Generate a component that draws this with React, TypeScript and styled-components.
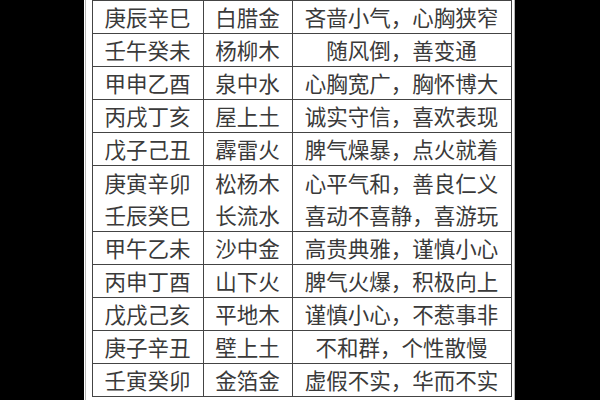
import React from 'react';
import styled, { createGlobalStyle } from 'styled-components';

const rows = [
  { ganzhi: '庚辰辛巳', nayin: '白腊金', trait: '吝啬小气，心胸狭窄' },
  { ganzhi: '壬午癸未', nayin: '杨柳木', trait: '随风倒，善变通' },
  { ganzhi: '甲申乙酉', nayin: '泉中水', trait: '心胸宽广，胸怀博大' },
  { ganzhi: '丙戌丁亥', nayin: '屋上土', trait: '诚实守信，喜欢表现' },
  { ganzhi: '戊子己丑', nayin: '霹雷火', trait: '脾气燥暴，点火就着' },
  { ganzhi: '庚寅辛卯', nayin: '松杨木', trait: '心平气和，善良仁义', joined: true },
  { ganzhi: '壬辰癸巳', nayin: '长流水', trait: '喜动不喜静，喜游玩' },
  { ganzhi: '甲午乙未', nayin: '沙中金', trait: '高贵典雅，谨慎小心' },
  { ganzhi: '丙申丁酉', nayin: '山下火', trait: '脾气火爆，积极向上' },
  { ganzhi: '戊戌己亥', nayin: '平地木', trait: '谨慎小心，不惹事非' },
  { ganzhi: '庚子辛丑', nayin: '壁上土', trait: '不和群，个性散慢' },
  { ganzhi: '壬寅癸卯', nayin: '金箔金', trait: '虚假不实，华而不实' },
];

const GlobalStyle = createGlobalStyle`
  html, body {
    margin: 0;
    padding: 0;
    background: #000;
  }
`;

const App: React.FC = () => {
  return (
    <>
      <GlobalStyle />
      <Page>
        <Sheet>
          <Frame>
            <Table>
              <colgroup>
                <col style={{ width: 111 }} />
                <col style={{ width: 89 }} />
                <col style={{ width: 219 }} />
              </colgroup>
              <tbody>
                {rows.map((row, index) => (
                  <Row key={index} joined={!!row.joined}>
                    <Cell>{row.ganzhi}</Cell>
                    <Cell>{row.nayin}</Cell>
                    <Cell>{row.trait}</Cell>
                  </Row>
                ))}
              </tbody>
            </Table>
          </Frame>
        </Sheet>
      </Page>
    </>
  );
};

const Page = styled.div`
  width: 600px;
  height: 400px;
  background: #000;
  display: flex;
  justify-content: center;
  overflow: hidden;
`;

const Sheet = styled.div`
  width: 431px;
  height: 400px;
  margin-left: -2px;
  background: #fff;
  padding-left: 1px;
  box-sizing: border-box;
`;

const Frame = styled.div`
  height: 100%;
  border-left: 1px solid #b5b5b5;
  border-right: 1px solid #b5b5b5;
  padding: 0 2px 0 6px;
  overflow: hidden;
`;

const Table = styled.table`
  width: 419px;
  table-layout: fixed;
  border-collapse: collapse;
  font-family: 'Noto Sans CJK SC', 'Noto Sans', sans-serif;
  font-size: 21.5px;
  color: #3a3a3a;
`;

const Row = styled.tr<{ joined: boolean }>`
  height: 33px;

  td {
    border-bottom: ${props => (props.joined ? 'hidden' : '1px solid #444')};
  }
`;

const Cell = styled.td`
  border: 1px solid #444;
  padding: 0;
  text-align: center;
  vertical-align: middle;
  white-space: nowrap;
  line-height: 1;
`;

export default App;
